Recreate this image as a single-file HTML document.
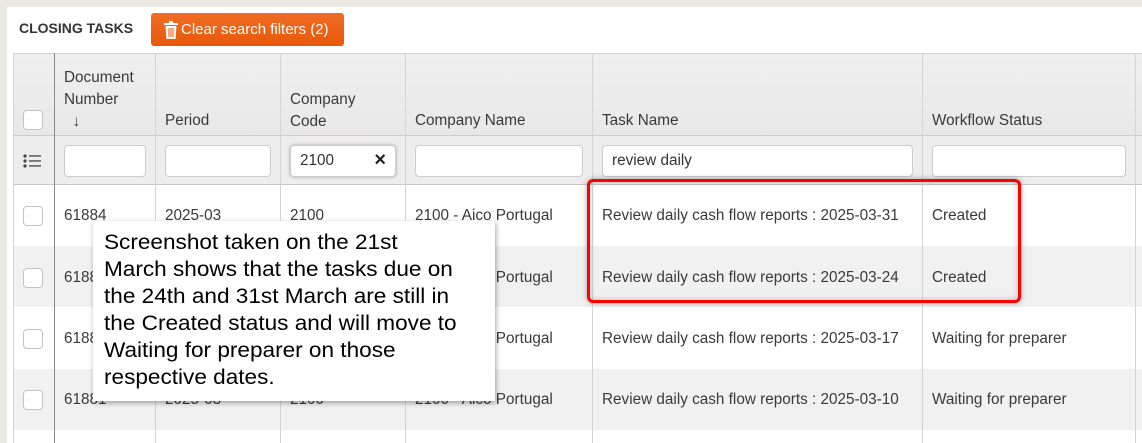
<!DOCTYPE html>
<html><head><style>
*{margin:0;padding:0;box-sizing:border-box}
body{width:1142px;height:443px;overflow:hidden;background:#ebe8e1;font-family:"Liberation Sans",sans-serif;color:#333;position:relative}
.panel{position:absolute;left:7px;top:7px;right:0;bottom:0;background:#fff}
.a{position:absolute}
.t{font-size:15.3px;color:#3a3a3a;white-space:nowrap}
.hdr{position:absolute;left:13px;top:53px;width:1129px;height:83px;background:linear-gradient(#f0efef,#e9e8e8);border-top:1px solid #d3d3d3;border-bottom:1px solid #ccc}
.flt{position:absolute;left:13px;top:136px;width:1129px;height:49px;background:#eeeded;border-bottom:1px solid #c8c8c8}
.inp{position:absolute;height:32px;top:145px;background:#fff;border:1px solid #ccc;border-radius:4px;font-size:15.3px;padding:6px 9px;color:#333}
.vl{position:absolute;top:53px;bottom:0;width:1px;background:#d4d4d4}
.cb{position:absolute;left:23px;width:20px;height:20px;border:1px solid #c4c4c4;border-radius:4px;background:#fff}
</style></head><body>
<div class="panel"></div>
<div class="a" style="left:19px;top:20px;font-size:14px;font-weight:bold;color:#333">CLOSING TASKS</div>
<div class="a" style="left:151px;top:13px;width:193px;height:33px;background:linear-gradient(#f06d25,#e8580a);border-radius:3px;color:#fff;font-size:15px;padding:8px 0 0 30px">Clear search filters (2)</div>
<svg class="a" style="left:164px;top:21px" width="14" height="18" viewBox="0 0 14 18"><rect x="0" y="2" width="14" height="2" fill="#fff"/><rect x="5" y="0" width="4" height="2" fill="#fff"/><path d="M1.5 5h11l-1 13h-9z" fill="#fff"/><path d="M5 7v9M7 7v9M9 7v9" stroke="#e8580a" stroke-width="1"/></svg>
<div class="hdr"></div>
<div class="flt"></div>
<div class="a" style="left:13px;top:246px;width:1129px;height:61px;background:#f1f1f1"></div>
<div class="a" style="left:13px;top:369px;width:1129px;height:61px;background:#f1f1f1"></div>
<div class="vl" style="left:13px"></div>
<div class="vl" style="left:54px;background:#8a8a8a"></div>
<div class="vl" style="left:155px"></div>
<div class="vl" style="left:280px"></div>
<div class="vl" style="left:405px"></div>
<div class="vl" style="left:592px"></div>
<div class="vl" style="left:922px"></div>
<div class="vl" style="left:1135px"></div>
<div class="cb" style="top:110px"></div>
<div class="a t" style="left:64px;top:67px;line-height:22px">Document<br>Number<br>&nbsp;&nbsp;↓</div>
<div class="a t" style="left:165px;top:112px">Period</div>
<div class="a t" style="left:290px;top:89px;line-height:22px">Company<br>Code</div>
<div class="a t" style="left:415px;top:112px">Company Name</div>
<div class="a t" style="left:602px;top:112px">Task Name</div>
<div class="a t" style="left:932px;top:112px">Workflow Status</div>
<svg class="a" style="left:23px;top:154px" width="19" height="14" viewBox="0 0 19 14"><g fill="#444"><circle cx="2" cy="2" r="1.6"/><circle cx="2" cy="7" r="1.6"/><circle cx="2" cy="12" r="1.6"/><rect x="6" y="1.3" width="12" height="1.3"/><rect x="6" y="6.3" width="12" height="1.3"/><rect x="6" y="11.3" width="12" height="1.3"/></g></svg>
<div class="inp" style="left:64px;width:82px"></div>
<div class="inp" style="left:165px;width:106px"></div>
<div class="inp" style="left:290px;width:106px;box-shadow:0 0 3px rgba(0,0,0,.3)">2100<span style="position:absolute;right:9px;top:3px;font-size:20px;font-weight:bold;color:#222">×</span></div>
<div class="inp" style="left:415px;width:168px"></div>
<div class="inp" style="left:602px;width:311px">review daily</div>
<div class="inp" style="left:932px;width:194px"></div>
<div class="cb" style="top:206px"></div><div class="cb" style="top:268px"></div><div class="cb" style="top:329px"></div><div class="cb" style="top:390px"></div>
<div class="a t" style="left:64px;top:207px">61884</div><div class="a t" style="left:165px;top:207px">2025-03</div><div class="a t" style="left:290px;top:207px">2100</div><div class="a t" style="left:415px;top:207px">2100 - Aico Portugal</div>
<div class="a t" style="left:64px;top:269px">61883</div><div class="a t" style="left:415px;top:269px">2100 - Aico Portugal</div>
<div class="a t" style="left:64px;top:330px">61882</div><div class="a t" style="left:415px;top:330px">2100 - Aico Portugal</div>
<div class="a t" style="left:64px;top:391px">61881</div><div class="a t" style="left:165px;top:391px">2025-03</div><div class="a t" style="left:290px;top:391px">2100</div><div class="a t" style="left:415px;top:391px">2100 - Aico Portugal</div>
<div class="a t" style="left:602px;top:207px">Review daily cash flow reports : 2025-03-31</div><div class="a t" style="left:932px;top:207px">Created</div>
<div class="a t" style="left:602px;top:269px">Review daily cash flow reports : 2025-03-24</div><div class="a t" style="left:932px;top:269px">Created</div>
<div class="a t" style="left:602px;top:330px">Review daily cash flow reports : 2025-03-17</div><div class="a t" style="left:932px;top:330px">Waiting for preparer</div>
<div class="a t" style="left:602px;top:391px">Review daily cash flow reports : 2025-03-10</div><div class="a t" style="left:932px;top:391px">Waiting for preparer</div>
<div class="a" style="left:587px;top:179px;width:434px;height:124px;border:3px solid #f00;border-radius:6px;box-shadow:0 0 6px rgba(0,0,0,.35),inset 0 0 6px rgba(0,0,0,.25)"></div>
<div class="a" style="left:93px;top:221px;width:402px;height:180px;background:#fff;box-shadow:1px 2px 5px rgba(0,0,0,.35)"></div>
<div class="a" style="left:104px;top:230px;font-family:'Liberation Sans',Arial,sans-serif;font-size:21px;line-height:26.9px;color:#000;white-space:nowrap;transform:scaleX(1.075);transform-origin:0 0">Screenshot taken on the 21st<br>March shows that the tasks due on<br>the 24th and 31st March are still in<br>the Created status and will move to<br>Waiting for preparer on those<br>respective dates.</div>
</body></html>
